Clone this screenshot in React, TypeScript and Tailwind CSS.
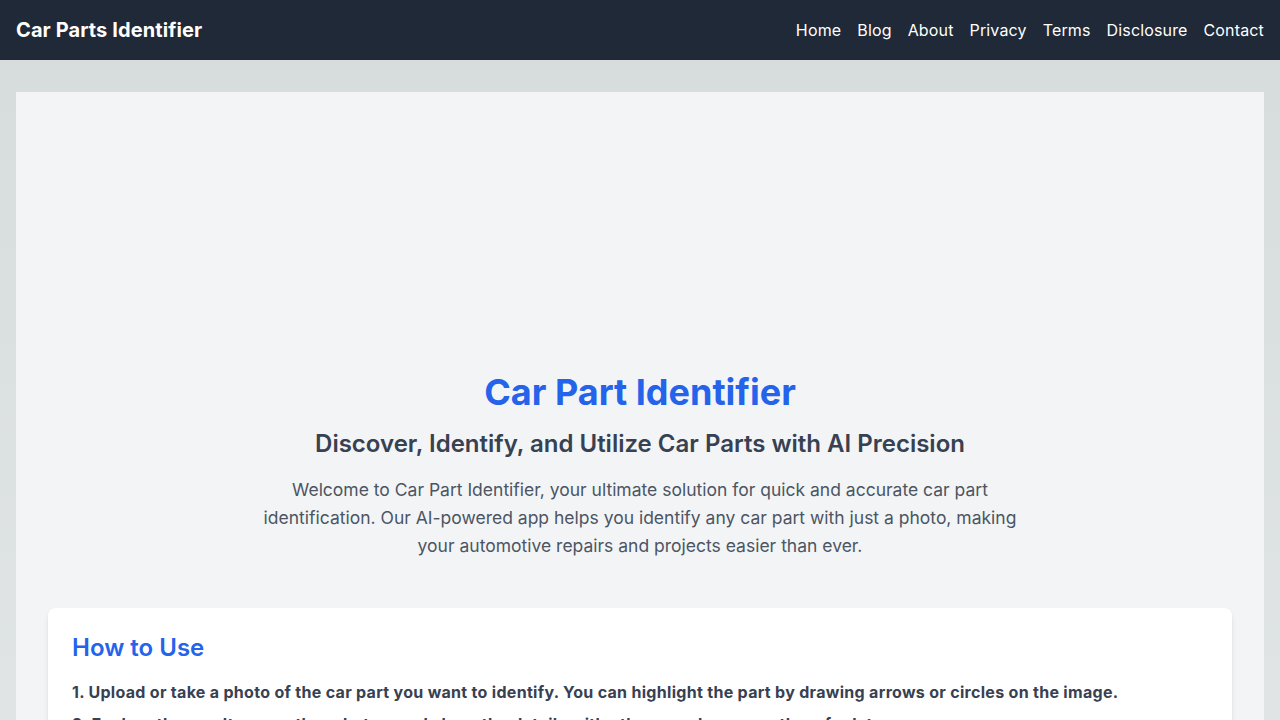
const links = ["Home", "Blog", "About", "Privacy", "Terms", "Disclosure", "Contact"];

const steps = [
  "1. Upload or take a photo of the car part you want to identify. You can highlight the part by drawing arrows or circles on the image.",
  "2. Explore the results, see other photos, and share the details with other people or save them for later.",
];

export default function App() {
  return (
    <div className="min-h-screen bg-gradient-to-b from-[#d6dcdc] to-[#e1e5e6] font-['Inter',sans-serif]">
      <header className="flex h-[60px] items-center justify-between bg-[#1f2937] px-4">
        <a href="#" className="text-xl font-bold tracking-[0.1px] text-white">Car Parts Identifier</a>
        <nav className="flex gap-4">
          {links.map(l => (
            <a key={l} href="#" className="text-base tracking-[0.15px] text-white">{l}</a>
          ))}
        </nav>
      </header>

      <main className="px-4 pt-8">
        <div className="bg-[#f3f4f6] p-8">
          {/* reserved slot above the hero */}
          <div className="h-[248px]" />

          <section className="mb-12 text-center">
            <h1 className="mb-4 text-4xl font-bold text-[#2563eb]">Car Part Identifier</h1>
            <h2 className="mb-4 text-2xl font-semibold text-[#374151]">Discover, Identify, and Utilize Car Parts with AI Precision</h2>
            <p className="mx-auto max-w-3xl text-[17.5px] leading-7 text-[#4b5563]">
              Welcome to Car Part Identifier, your ultimate solution for quick and accurate car part identification. Our AI-powered app helps you identify any car part with just a photo, making your automotive repairs and projects easier than ever.
            </p>
          </section>

          <section className="rounded-lg bg-white p-6 shadow-md">
            <h2 className="mb-4 text-2xl font-semibold text-[#2563eb]">How to Use</h2>
            <ol className="space-y-2">
              {steps.map(s => (
                <li key={s} className="font-bold tracking-[0.3px] text-[#374151]">{s}</li>
              ))}
            </ol>
          </section>
        </div>
      </main>
    </div>
  );
}
